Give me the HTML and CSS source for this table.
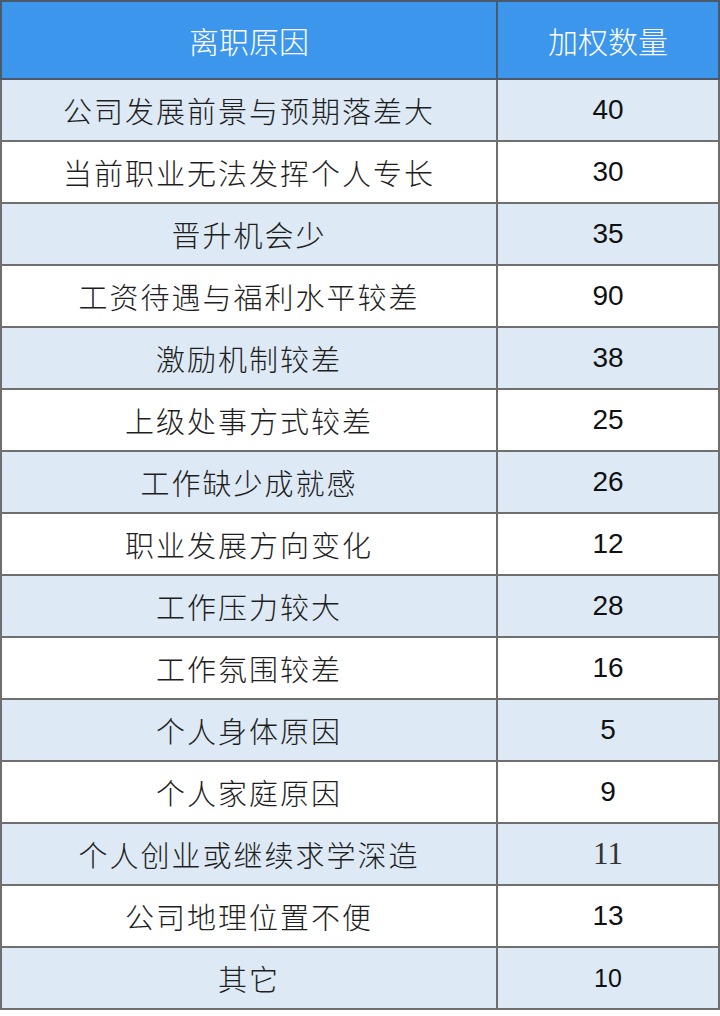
FILE: index.html
```html
<!DOCTYPE html>
<html lang="zh">
<head>
<meta charset="utf-8">
<title>离职原因</title>
<link rel="stylesheet" href="styles.css">
</head>
<body>
<table class="tbl">
  <thead>
    <tr class="head"><th class="c1">离职原因</th><th class="c2">加权数量</th></tr>
  </thead>
  <tbody>
    <tr class="alt"><td>公司发展前景与预期落差大</td><td class="num">40</td></tr>
    <tr><td>当前职业无法发挥个人专长</td><td class="num">30</td></tr>
    <tr class="alt"><td>晋升机会少</td><td class="num">35</td></tr>
    <tr><td>工资待遇与福利水平较差</td><td class="num">90</td></tr>
    <tr class="alt"><td>激励机制较差</td><td class="num">38</td></tr>
    <tr><td>上级处事方式较差</td><td class="num">25</td></tr>
    <tr class="alt"><td>工作缺少成就感</td><td class="num">26</td></tr>
    <tr><td>职业发展方向变化</td><td class="num">12</td></tr>
    <tr class="alt"><td>工作压力较大</td><td class="num">28</td></tr>
    <tr><td>工作氛围较差</td><td class="num">16</td></tr>
    <tr class="alt"><td>个人身体原因</td><td class="num">5</td></tr>
    <tr><td>个人家庭原因</td><td class="num">9</td></tr>
    <tr class="alt"><td>个人创业或继续求学深造</td><td class="num serif">11</td></tr>
    <tr><td>公司地理位置不便</td><td class="num">13</td></tr>
    <tr class="alt"><td>其它</td><td class="num small">10</td></tr>
  </tbody>
</table>
</body>
</html>
```
FILE: styles.css
```css
html, body {
  margin: 0;
  padding: 0;
  background: #ffffff;
}
.tbl {
  border-collapse: collapse;
  table-layout: fixed;
  width: 718px;
  font-family: "Noto Sans CJK SC", "Liberation Sans", sans-serif;
  color: #1e1e1e;
}
.tbl th, .tbl td {
  border: 2px solid #6e6e6e;
  text-align: center;
  padding: 0;
  box-sizing: border-box;
}
.tbl .c1 { width: 496px; }
.tbl .c2 { width: 222px; }
.head th {
  background: #3b96ec;
  color: #ffffff;
  font-weight: 300;
  font-size: 30px;
  height: 78px;
  border-color: #4a5a6a;
}
.tbl td {
  height: 62px;
  font-size: 29px;
  font-weight: 300;
  letter-spacing: 2px;
  background: #ffffff;
}
.tbl tr.alt td {
  background: #dde9f4;
}
.tbl td.num {
  font-family: "Liberation Sans", "Noto Sans", sans-serif;
  font-weight: 400;
  font-size: 28px;
  letter-spacing: 0;
  color: #111111;
}
.tbl td.serif {
  font-family: "Liberation Serif", serif;
  font-size: 31px;
  color: #333333;
}
.tbl td.small {
  font-size: 25px;
}
```
